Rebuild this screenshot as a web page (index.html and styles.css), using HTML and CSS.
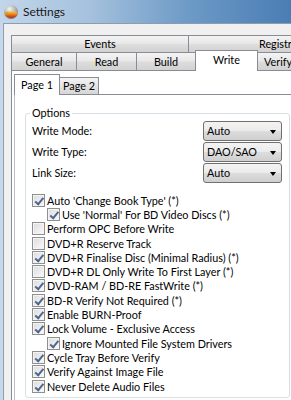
FILE: index.html
```html
<!DOCTYPE html>
<html>
<head>
    <title>Settings</title>
    <link rel="stylesheet" href="styles.css">
</head>
<body>
    <!-- Title bar -->
    <div class="titlebar">
        <svg class="appicon" width="16" height="16" viewBox="0 0 16 16">
            <defs>
                <radialGradient id="silver" cx="0.4" cy="0.3" r="0.8">
                    <stop offset="0" stop-color="#f4f4f4"/>
                    <stop offset="0.6" stop-color="#a8a8a8"/>
                    <stop offset="1" stop-color="#5a5a5a"/>
                </radialGradient>
                <linearGradient id="fire" x1="0" y1="0" x2="0" y2="1">
                    <stop offset="0" stop-color="#f6d23a"/>
                    <stop offset="0.5" stop-color="#ec7a1c"/>
                    <stop offset="1" stop-color="#b8260f"/>
                </linearGradient>
            </defs>
            <circle cx="8" cy="8" r="7" fill="url(#silver)"/>
            <path d="M1.2 8.5 Q8 6 14.8 8.5 A7 7 0 0 1 1.2 8.5 Z" fill="url(#fire)"/>
            <path d="M2 9 Q3.5 8 5 8.6" stroke="#7ad040" stroke-width="1.2" fill="none"/>
        </svg>
        <span class="title">Settings</span>
    </div>

    <div class="window">
        <div class="tabs">
            <div class="tabrow row1">
                <div class="tab t-events">Events</div>
                <div class="tab t-registry">Registry</div>
            </div>
            <div class="tabrow row2">
                <div class="tab t-general">General</div>
                <div class="tab t-read">Read</div>
                <div class="tab t-build">Build</div>
                <div class="tab t-write active">Write</div>
                <div class="tab t-verify">Verify</div>
            </div>

            <div class="panel">
                <div class="subtabs">
                    <div class="subtab active">Page 1</div>
                    <div class="subtab">Page 2</div>
                </div>
                <div class="subpanel">
                    <fieldset class="group">
                        <legend>Options</legend>
                        <div class="field first">
                            <span>Write Mode:</span>
                            <div class="combo">Auto<i class="arrow"></i></div>
                        </div>
                        <div class="field">
                            <span>Write Type:</span>
                            <div class="combo">DAO/SAO<i class="arrow"></i></div>
                        </div>
                        <div class="field">
                            <span>Link Size:</span>
                            <div class="combo">Auto<i class="arrow"></i></div>
                        </div>

                        <div class="checks">
                            <label class="check"><span class="box on"></span>Auto 'Change Book Type' (*)</label>
                            <label class="check sub"><span class="box on"></span>Use 'Normal' For BD Video Discs (*)</label>
                            <label class="check"><span class="box"></span>Perform OPC Before Write</label>
                            <label class="check"><span class="box"></span>DVD+R Reserve Track</label>
                            <label class="check"><span class="box on"></span>DVD+R Finalise Disc (Minimal Radius) (*)</label>
                            <label class="check"><span class="box"></span>DVD+R DL Only Write To First Layer (*)</label>
                            <label class="check"><span class="box on"></span>DVD-RAM / BD-RE FastWrite (*)</label>
                            <label class="check"><span class="box on"></span>BD-R Verify Not Required (*)</label>
                            <label class="check"><span class="box on"></span>Enable BURN-Proof</label>
                            <label class="check"><span class="box on"></span>Lock Volume - Exclusive Access</label>
                            <label class="check sub"><span class="box on"></span>Ignore Mounted File System Drivers</label>
                            <label class="check"><span class="box on"></span>Cycle Tray Before Verify</label>
                            <label class="check"><span class="box on"></span>Verify Against Image File</label>
                            <label class="check"><span class="box on"></span>Never Delete Audio Files</label>
                        </div>
                    </fieldset>
                    <div class="group next"></div>
                </div>
            </div>
        </div>
    </div>
</body>
</html>
```

FILE: styles.css
```css
body {
    margin: 0;
    width: 291px;
    height: 400px;
    overflow: hidden;
    background: #c6d8ea;
    font-family: Lato, "Open Sans", sans-serif;
    font-size: 10.8px;
    color: #000;
}
.titlebar {
    height: 23px;
    display: flex;
    align-items: center;
    padding-left: 3px;
    background: linear-gradient(to right, #c2d6ea 0%, #a6c2de 30%, #6d9ac6 65%, #4a7db4 100%);
}
.appicon {
    margin-right: 4px;
}
.title {
    font-size: 12px;
    color: #1a1a1a;
}
.window {
    margin-left: 3px;
    width: 420px;
    height: 380px;
    background: #f0f0f0;
    border-left: 1px solid #8d9db0;
    border-top: 1px solid #8d9db0;
    padding: 11px 0 0 7px;
}
.tabrow {
    display: flex;
}
.tab {
    border: 1px solid #898c95;
    border-bottom: none;
    margin-right: -1px;
    background: linear-gradient(#f4f4f4, #e8e8e8 45%, #dcdcdc 55%, #d2d2d2);
    text-align: center;
    box-sizing: border-box;
    white-space: nowrap;
}
.row1 .tab {
    height: 17px;
    line-height: 16px;
}
.row2 .tab {
    height: 18px;
    line-height: 17px;
}
.t-events { width: 178px; }
.t-registry { width: 140px; text-align: left; padding-left: 70px; }
.t-general { width: 66px; }
.t-read { width: 61px; }
.t-build { width: 60px; }
.t-write { width: 63px; }
.t-verify { width: 63px; text-align: left; padding-left: 6px; }
.row2 .tab.active {
    background: #fff;
    height: 21px;
    margin-top: -2px;
    margin-bottom: -1px;
    line-height: 18px;
    position: relative;
    z-index: 1;
}
.panel {
    background: #fff;
    border: 1px solid #898c95;
    height: 340px;
    padding: 3px 0 0 2px;
}
.subtabs {
    display: flex;
    align-items: flex-end;
    height: 20px;
}
.subtab {
    border: 1px solid #898c95;
    border-bottom: none;
    box-sizing: border-box;
    height: 17px;
    line-height: 16px;
    width: 40px;
    text-align: center;
    background: linear-gradient(#f4f4f4, #e4e4e4 50%, #d6d6d6);
}
.subtab.active {
    background: #fff;
    width: 46px;
    height: 21px;
    line-height: 19px;
    margin-right: -1px;
    margin-bottom: -1px;
    position: relative;
    z-index: 1;
}
.subpanel {
    border-top: 1px solid #898c95;
    border-left: 1px solid #b9bcc4;
    padding: 0 0 0 10px;
}
.group {
    width: 265px;
    box-sizing: border-box;
    margin: 10px 0 0 0;
    border: 1px solid #d5dfe5;
    border-radius: 3px;
    padding: 0 7px 0 6px;
}
.group legend {
    padding: 0 2px;
    margin-left: -2px;
    line-height: 16px;
}
.field {
    display: flex;
    align-items: center;
    justify-content: space-between;
    height: 21px;
}
.field.first {
    margin-top: -1px;
}
.combo {
    width: 79px;
    height: 20px;
    box-sizing: border-box;
    border: 1px solid #707070;
    border-radius: 3px;
    background: linear-gradient(#f3f3f3, #ebebeb 50%, #dddddd 50%, #cfcfcf);
    display: flex;
    align-items: center;
    padding-left: 3px;
    position: relative;
}
.arrow {
    position: absolute;
    right: 5px;
    top: 8px;
    width: 0;
    height: 0;
    border-left: 3.5px solid transparent;
    border-right: 3.5px solid transparent;
    border-top: 4px solid #000;
}
.checks {
    margin-top: 10px;
    padding-bottom: 4px;
}
.check {
    display: flex;
    align-items: center;
    height: 14.3px;
    white-space: nowrap;
}
.check.sub {
    padding-left: 15px;
}
.box {
    width: 13px;
    height: 13px;
    box-sizing: border-box;
    border: 1px solid #8e8f8f;
    background: linear-gradient(135deg, #dcdcdc, #fafafa);
    box-shadow: inset 0 0 0 1px #f4f4f4;
    margin-right: 2px;
    position: relative;
    flex: none;
}
.box.on::after {
    content: "";
    position: absolute;
    left: 3.5px;
    top: 1px;
    width: 3px;
    height: 6.5px;
    border-right: 2px solid #4f6590;
    border-bottom: 2px solid #4f6590;
    transform: rotate(40deg);
}
.group.next {
    margin-top: 12px;
    height: 40px;
    border-color: #d5dfe5;
}
```
